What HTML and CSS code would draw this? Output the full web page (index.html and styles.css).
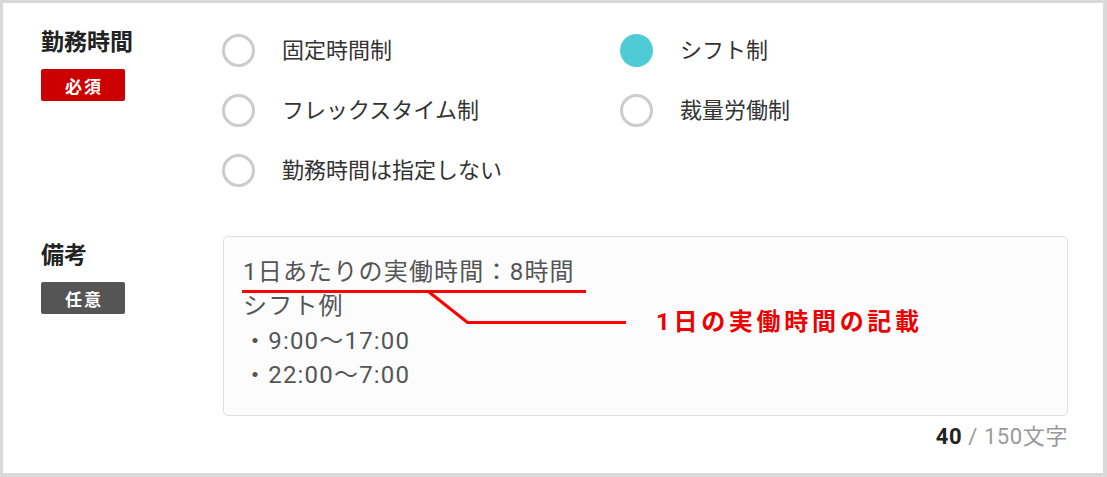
FILE: index.html
```html
<!DOCTYPE html>
<html lang="ja">
<head>
<meta charset="utf-8">
<link rel="stylesheet" href="styles.css">
</head>
<body>
<div class="frame">
  <div class="row row-time">
    <div class="label-col">
      <div class="title">勤務時間</div>
      <span class="badge badge-req">必須</span>
    </div>
    <div class="options">
      <label class="opt"><span class="radio"></span><span class="opt-text">固定時間制</span></label>
      <label class="opt"><span class="radio radio-on"></span><span class="opt-text">シフト制</span></label>
      <label class="opt"><span class="radio"></span><span class="opt-text">フレックスタイム制</span></label>
      <label class="opt"><span class="radio"></span><span class="opt-text">裁量労働制</span></label>
      <label class="opt"><span class="radio"></span><span class="opt-text">勤務時間は指定しない</span></label>
    </div>
  </div>
  <div class="row row-note">
    <div class="label-col">
      <div class="title">備考</div>
      <span class="badge badge-opt">任意</span>
    </div>
    <div class="note-col">
      <div class="note-box">
        <div class="note-text">1日あたりの実働時間：8時間<br>シフト例<br>・9:00～17:00<br>・22:00～7:00</div>
        <svg class="annot-lines" width="420" height="100" viewBox="0 0 420 100">
          <path d="M18 54.5 H362" stroke="#ff0000" stroke-width="3" fill="none"/>
          <path d="M205 55 L243.5 85.5 H402" stroke="#ff0000" stroke-width="3" fill="none" stroke-linejoin="miter"/>
        </svg>
        <div class="annot-text">1日の実働時間の記載</div>
      </div>
      <div class="counter"><b class="count">40</b> / 150文字</div>
    </div>
  </div>
</div>
</body>
</html>
```
FILE: styles.css
```css
* { box-sizing: border-box; }
html, body { margin: 0; padding: 0; background: #fff; }
body { font-family: Roboto, "Noto Sans CJK JP", sans-serif; color: #333; }

.frame {
  width: 1107px;
  height: 477px;
  border-style: solid;
  border-color: #d9d9d9;
  border-width: 3px 4px 4px 3px;
  padding: 17px 0 0 38px;
  background: #fff;
}

.row { display: flex; align-items: flex-start; }

.label-col { width: 181px; flex: none; display: flex; flex-direction: column; align-items: flex-start; }
.row-time .label-col { padding-top: 7px; }
.row-note { margin-top: 36px; }
.row-note .label-col { padding-top: 4px; width: 182px; }

.title { font-size: 23px; line-height: 32px; font-weight: 700; color: #222; }

.badge {
  margin-top: 10px;
  width: 84px; height: 32px;
  display: flex; align-items: center; justify-content: center;
  color: #fff; font-size: 17px; font-weight: 700; letter-spacing: 2px;
  padding-left: 2px;
  border-radius: 2px;
}
.badge-req { background: #cc0000; }
.badge-opt { background: #555555; }

.options {
  display: grid;
  grid-template-columns: 398px auto;
  grid-auto-rows: 60px;
}
.opt { display: flex; align-items: center; }
.radio {
  width: 33px; height: 33px; border-radius: 50%;
  border: 3px solid #cccccc; flex: none; background: #fff;
}
.radio-on { border: none; background: #4fcbd5; }
.opt-text { margin-left: 27px; font-size: 22px; line-height: 30px; color: #333; margin-top: 2px; }

.note-col { width: 845px; display: flex; flex-direction: column; }
.note-box {
  position: relative;
  height: 180px;
  border: 1px solid #dedede;
  border-radius: 5px;
  background: #fcfcfc;
  padding: 18px 19px;
}
.note-text { font-size: 24px; line-height: 34.3px; color: #555; letter-spacing: 1.2px; }

.annot-lines { position: absolute; left: 0; top: 0; }
.annot-text {
  position: absolute; left: 432px; top: 70px;
  font-size: 24px; line-height: 30px; font-weight: 700; color: #ee0000; letter-spacing: 3.7px;
  white-space: nowrap;
}

.counter { align-self: flex-end; margin-top: 6px; font-size: 22px; line-height: 30px; color: #999; letter-spacing: 0.6px; }
.count { color: #222; font-weight: 700; }
```
